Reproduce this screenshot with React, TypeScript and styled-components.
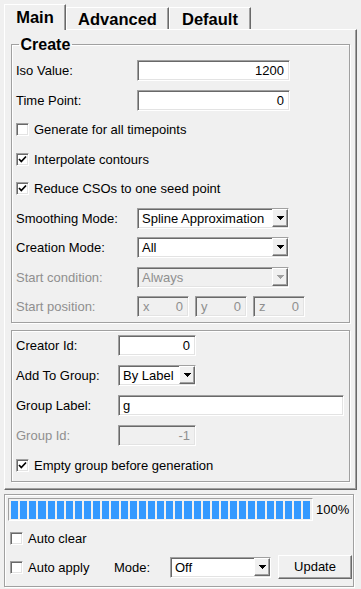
import React, { ReactElement } from "react"
import styled, { createGlobalStyle } from "styled-components"

// ************
// data
// ************

const SEGMENTS = 33

// ************
// parts
// ************

function CheckBox({ checked, label, disabled }: { checked?: boolean; label: string; disabled?: boolean }): ReactElement {
	return (
		<CheckItem $disabled={disabled}>
			<Box>
				{checked && (
					<svg width="9" height="9" viewBox="0 0 9 9">
						<polyline points="1,4 3.3,6.5 8,1.5" fill="none" stroke="#000" strokeWidth="1.7" />
					</svg>
				)}
			</Box>
			{label}
		</CheckItem>
	)
}

function Dropdown({ value, width, disabled }: { value: string; width: number; disabled?: boolean }): ReactElement {
	return (
		<Select $w={width} $disabled={disabled}>
			<SelectText>{value}</SelectText>
			<ArrowButton>
				<svg width="7" height="4" viewBox="0 0 7 4" shapeRendering="crispEdges">
					<polygon points="0,0 7,0 3.5,4" fill={disabled ? "#a0a0a0" : "#000"} />
				</svg>
			</ArrowButton>
		</Select>
	)
}

// ************
// component
// ************

export default function App(): ReactElement {
	return (
		<>
			<GlobalStyle />
			<Window>
				<TabBar>
					<Tab $active $w={62}>Main</Tab>
					<Tab $w={103}>Advanced</Tab>
					<Tab $w={82}>Default</Tab>
				</TabBar>
				<Pane>
					<Group>
						<Legend>Create</Legend>
						<Row $h={29.5}>
							<Label $w={121}>Iso Value:</Label>
							<Field $w={153} $align="right">1200</Field>
						</Row>
						<Row $h={29.5}>
							<Label $w={121}>Time Point:</Label>
							<Field $w={153} $align="right">0</Field>
						</Row>
						<Row $h={29.5}>
							<CheckBox label="Generate for all timepoints" />
						</Row>
						<Row $h={29.5}>
							<CheckBox checked label="Interpolate contours" />
						</Row>
						<Row $h={29.5}>
							<CheckBox checked label="Reduce CSOs to one seed point" />
						</Row>
						<Row $h={29.5}>
							<Label $w={121}>Smoothing Mode:</Label>
							<Dropdown value="Spline Approximation" width={152} />
						</Row>
						<Row $h={29.5}>
							<Label $w={121}>Creation Mode:</Label>
							<Dropdown value="All" width={152} />
						</Row>
						<Row $h={29.5}>
							<Label $w={121} $disabled>Start condition:</Label>
							<Dropdown value="Always" width={152} disabled />
						</Row>
						<Row $h={29.5}>
							<Label $w={121} $disabled>Start position:</Label>
							<Coords>
								{["x", "y", "z"].map((axis) => (
									<Coord key={axis}>
										<span>{axis}</span>
										<span>0</span>
									</Coord>
								))}
							</Coords>
						</Row>
					</Group>
					<Group $plain>
						<Row $h={30}>
							<Label $w={102}>Creator Id:</Label>
							<Field $w={78} $align="right">0</Field>
						</Row>
						<Row $h={30}>
							<Label $w={102}>Add To Group:</Label>
							<Dropdown value="By Label" width={78} />
						</Row>
						<Row $h={30}>
							<Label $w={102}>Group Label:</Label>
							<Field $w={226}>g</Field>
						</Row>
						<Row $h={30}>
							<Label $w={102} $disabled>Group Id:</Label>
							<Field $w={78} $align="right" $disabled>-1</Field>
						</Row>
						<Row $h={30}>
							<CheckBox checked label="Empty group before generation" />
						</Row>
					</Group>
				</Pane>
				<Panel>
					<ProgressRow>
						<Progress>
							{Array.from({ length: SEGMENTS }).map((_, i) => (
								<Segment key={i} />
							))}
						</Progress>
						<Percent>100%</Percent>
					</ProgressRow>
					<PanelRow $h={34}>
						<CheckBox label="Auto clear" />
					</PanelRow>
					<PanelRow $h={24}>
						<CheckSlot>
							<CheckBox label="Auto apply" />
						</CheckSlot>
						<Label $w={56}>Mode:</Label>
						<Dropdown value="Off" width={101} />
						<Button>Update</Button>
					</PanelRow>
				</Panel>
			</Window>
		</>
	)
}

// ************
// styles
// ************

const GlobalStyle = createGlobalStyle`
	html, body {
		margin: 0;
		padding: 0;
		background: #f0f0f0;
	}
	body {
		font-family: "Liberation Sans", Arial, sans-serif;
		font-size: 13px;
		color: #000;
	}
`
const Window = styled.div`
	display: flex;
	flex-direction: column;

	width: 361px;
	height: 589px;
	padding: 4px 4px 0 4px;
	box-sizing: border-box;

	overflow: hidden;
`
const TabBar = styled.div`
	display: flex;
	align-items: flex-end;

	height: 25px;
`
const Tab = styled.div<{ $active?: boolean; $w: number }>`
	position: relative;
	z-index: ${({ $active }) => ($active ? 1 : 0)};

	width: ${({ $w }) => $w}px;
	height: ${({ $active }) => ($active ? 26 : 22)}px;
	margin-bottom: ${({ $active }) => ($active ? -1 : 0)}px;
	padding-top: ${({ $active }) => ($active ? 3 : 2)}px;
	box-sizing: border-box;
	border-top: 1px solid #fff;
	border-left: 1px solid #fff;
	border-right: 1px solid #696969;
	box-shadow: inset -1px 0 0 #a0a0a0;

	background: #f0f0f0;
	font-size: 16.5px;
	font-weight: bold;
	line-height: 19px;
	text-align: center;
`
const Pane = styled.div`
	display: flex;
	flex-direction: column;
	gap: 7px;

	height: 461px;
	padding: 5px 6px 0 6px;
	box-sizing: border-box;
	border-top: 1px solid #fff;
	border-left: 1px solid #fff;
	border-right: 1px solid #696969;
	border-bottom: 1px solid #696969;
	box-shadow: inset -1px -1px 0 #a0a0a0;
`
const Group = styled.fieldset<{ $plain?: boolean }>`
	display: flex;
	flex-direction: column;

	margin: 0;
	padding: ${({ $plain }) => ($plain ? "0 0 0 4px" : "2px 0 0 4px")};
	border: 1px solid #a0a0a0;
	box-shadow: 1px 1px 0 #fff, inset 1px 1px 0 #fff;
	min-width: 0;
`
const Legend = styled.legend`
	margin-left: 3px;
	padding: 0 1.5px;

	font-size: 16px;
	font-weight: bold;
	line-height: 19px;
`
const Row = styled.div<{ $h: number }>`
	display: flex;
	align-items: center;

	height: ${({ $h }) => $h}px;
	flex: 0 0 auto;
`
const Label = styled.span<{ $w: number; $disabled?: boolean }>`
	flex: 0 0 ${({ $w }) => $w}px;
	color: ${({ $disabled }) => ($disabled ? "#8f8f8f" : "#000")};
	white-space: nowrap;
`
const sunken = `
	box-sizing: border-box;
	border-style: solid;
	border-width: 1px;
	border-color: #a0a0a0 #fff #fff #a0a0a0;
	box-shadow: inset 1px 1px 0 #696969, inset -1px -1px 0 #e3e3e3;
`
const Field = styled.div<{ $w: number; $align?: "left" | "right"; $disabled?: boolean }>`
	${sunken}
	width: ${({ $w }) => $w}px;
	height: 21px;
	padding: 0 5px 0 4px;

	background: ${({ $disabled }) => ($disabled ? "#f0f0f0" : "#fff")};
	color: ${({ $disabled }) => ($disabled ? "#8f8f8f" : "#000")};
	line-height: 19px;
	text-align: ${({ $align }) => $align ?? "left"};
`
const Select = styled.div<{ $w: number; $disabled?: boolean }>`
	${sunken}
	display: flex;
	align-items: flex-start;

	width: ${({ $w }) => $w}px;
	height: 21px;

	background: ${({ $disabled }) => ($disabled ? "#f0f0f0" : "#fff")};
	color: ${({ $disabled }) => ($disabled ? "#8f8f8f" : "#000")};
`
const SelectText = styled.span`
	flex: 1;
	padding-left: 4px;
	line-height: 19px;
	white-space: nowrap;
	overflow: hidden;
`
const ArrowButton = styled.span`
	display: grid;
	place-items: center;

	width: 16px;
	height: 18px;
	box-sizing: border-box;
	border-style: solid;
	border-width: 1px;
	border-color: #fff #696969 #696969 #fff;
	box-shadow: inset -1px -1px 0 #a0a0a0;

	background: #f0f0f0;
`
const Coords = styled.div`
	display: flex;
	gap: 6px;
`
const Coord = styled.div`
	${sunken}
	display: flex;
	justify-content: space-between;

	width: 52px;
	height: 21px;
	padding: 0 5px 0 5px;

	color: #8f8f8f;
	line-height: 19px;
`
const CheckItem = styled.label<{ $disabled?: boolean }>`
	display: flex;
	align-items: center;
	gap: 5px;

	color: ${({ $disabled }) => ($disabled ? "#8f8f8f" : "#000")};
	white-space: nowrap;
`
const Box = styled.span`
	${sunken}
	display: grid;
	place-items: center;

	width: 13px;
	height: 13px;

	background: #fff;
`
const Panel = styled.div`
	display: flex;
	flex-direction: column;

	height: 93px;
	margin-top: 4px;
	padding: 3px 0 0 3px;
	box-sizing: border-box;
	width: 350px;
	border: 1px solid #a0a0a0;
	box-shadow: 1px 1px 0 #fff, inset 1px 1px 0 #fff;
`
const ProgressRow = styled.div`
	display: flex;
	align-items: center;
	gap: 3px;
`
const Progress = styled.div`
	display: flex;
	gap: 2px;

	width: 305px;
	height: 23px;
	padding: 2px 2px 1px 2px;
	box-sizing: border-box;
	border-style: solid;
	border-width: 1px;
	border-color: #a0a0a0 #fff #fff #a0a0a0;

	background: #f0f0f0;
`
const Segment = styled.span`
	flex: 1;
	background: #3399ff;
`
const Percent = styled.span`
	font-size: 13px;
`
const PanelRow = styled.div<{ $h: number }>`
	display: flex;
	align-items: center;

	height: ${({ $h }) => $h}px;
	padding-left: 2px;
`
const CheckSlot = styled.div`
	flex: 0 0 104px;
`
const Button = styled.div`
	width: 74px;
	height: 24px;
	margin-left: 7px;
	box-sizing: border-box;
	border-style: solid;
	border-width: 1px;
	border-color: #fff #696969 #696969 #fff;
	box-shadow: inset -1px -1px 0 #a0a0a0;

	line-height: 22px;
	text-align: center;
`
